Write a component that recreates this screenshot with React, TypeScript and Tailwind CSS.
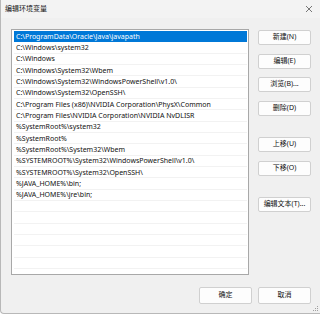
import React from "react";

const entries = [
  "C:\\ProgramData\\Oracle\\Java\\javapath",
  "C:\\Windows\\system32",
  "C:\\Windows",
  "C:\\Windows\\System32\\Wbem",
  "C:\\Windows\\System32\\WindowsPowerShell\\v1.0\\",
  "C:\\Windows\\System32\\OpenSSH\\",
  "C:\\Program Files (x86)\\NVIDIA Corporation\\PhysX\\Common",
  "C:\\Program Files\\NVIDIA Corporation\\NVIDIA NvDLISR",
  "%SystemRoot%\\system32",
  "%SystemRoot%",
  "%SystemRoot%\\System32\\Wbem",
  "%SYSTEMROOT%\\System32\\WindowsPowerShell\\v1.0\\",
  "%SYSTEMROOT%\\System32\\OpenSSH\\",
  "%JAVA_HOME%\\bin;",
  "%JAVA_HOME%\\jre\\bin;",
];

const rows = [...entries, ...Array(7).fill("")];

function Btn({ label, className = "" }: { label: string; className?: string }) {
  return (
    <div
      className={
        "flex items-center justify-center h-[15px] w-[53px] bg-[#fdfdfd] border border-[#d0d0d0] rounded-[2px] text-[7px] text-[#111]" +
        " " +
        className
      }
    >
      {label}
    </div>
  );
}

export default function App() {
  return (
    <div
      className="w-[320px] h-[314px] bg-[#f0f0f0] flex flex-col border-l border-b border-[#b8b8b8] rounded-bl-[4px] overflow-hidden relative"
      style={{ fontFamily: '"Noto Sans", "Noto Sans CJK SC", sans-serif' }}
    >
      <div className="h-[18px] flex items-center justify-between pl-[4px] pr-[7px] bg-[#f3f3f3]">
        <span className="text-[7px] text-[#111]">编辑环境变量</span>
        <svg width="8" height="8" viewBox="0 0 8 8">
          <path d="M1 1 L7 7 M7 1 L1 7" stroke="#555" strokeWidth="0.8" />
        </svg>
      </div>
      <div className="flex pl-[10px] pt-[11px]">
        <div className="w-[238px] h-[246px] bg-white border border-[#a8a8a8] pl-[2px] pr-[1px] pt-[1px] overflow-hidden">
          {rows.map((r, i) => (
            <div
              key={i}
              className={
                "h-[11.33px] flex items-center pl-[2px] text-[7px] leading-none whitespace-nowrap border-b " +
                (i === 0
                  ? "bg-[#0078d7] text-white border-[#0078d7]"
                  : "text-[#111] border-[#f2f2f2]")
              }
            >
              {r}
            </div>
          ))}
        </div>
        <div className="flex flex-col ml-[9px] pt-[1px]">
          <Btn label="新建(N)" />
          <Btn label="编辑(E)" className="mt-[9px]" />
          <Btn label="浏览(B)..." className="mt-[8px]" />
          <Btn label="删除(D)" className="mt-[9px]" />
          <Btn label="上移(U)" className="mt-[21px]" />
          <Btn label="下移(O)" className="mt-[9px]" />
          <Btn label="编辑文本(T)..." className="mt-[21px]" />
        </div>
      </div>
      <div className="flex justify-end pr-[9px] mt-[12px] gap-[6px]">
        <Btn label="确定" className="h-[17px] w-[52px] border-[#7fb0e0]" />
        <Btn label="取消" className="h-[17px] w-[51px]" />
      </div>
      <svg className="absolute right-[1px] bottom-[1px]" width="6" height="6" viewBox="0 0 6 6">
        <rect x="4" y="0" width="1" height="1" fill="#a0a0a0" />
        <rect x="2" y="2" width="1" height="1" fill="#a0a0a0" />
        <rect x="4" y="2" width="1" height="1" fill="#a0a0a0" />
        <rect x="0" y="4" width="1" height="1" fill="#a0a0a0" />
        <rect x="2" y="4" width="1" height="1" fill="#a0a0a0" />
        <rect x="4" y="4" width="1" height="1" fill="#a0a0a0" />
      </svg>
    </div>
  );
}
